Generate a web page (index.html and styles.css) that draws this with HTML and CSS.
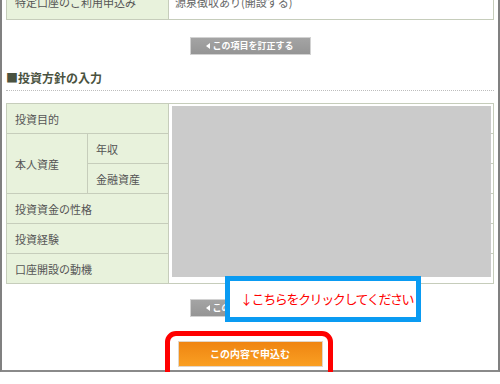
FILE: index.html
```html
<!DOCTYPE html>
<html lang="ja">
<head>
  <meta charset="UTF-8">
  <title>投資方針の入力</title>
  <link rel="stylesheet" href="styles.css">
</head>
<body>
  <div class="frame">
    <table class="form-table top-table">
      <colgroup>
        <col class="col-label">
        <col>
      </colgroup>
      <tr>
        <th>特定口座のご利用申込み</th>
        <td class="value">源泉徴収あり(開設する)</td>
      </tr>
    </table>

    <div class="btn-row first">
      <a class="btn-gray">この項目を訂正する</a>
    </div>

    <h2 class="section-title">■投資方針の入力</h2>

    <div class="table-wrap">
      <table class="form-table">
        <colgroup>
          <col class="col-half">
          <col class="col-half">
          <col>
        </colgroup>
        <tr>
          <th colspan="2">投資目的</th>
          <td></td>
        </tr>
        <tr>
          <th rowspan="2">本人資産</th>
          <th>年収</th>
          <td></td>
        </tr>
        <tr>
          <th>金融資産</th>
          <td></td>
        </tr>
        <tr>
          <th colspan="2">投資資金の性格</th>
          <td></td>
        </tr>
        <tr>
          <th colspan="2">投資経験</th>
          <td></td>
        </tr>
        <tr>
          <th colspan="2">口座開設の動機</th>
          <td></td>
        </tr>
      </table>
      <div class="mask"></div>
    </div>

    <div class="btn-row second">
      <a class="btn-gray">この項目を訂正する</a>
    </div>

    <div class="btn-row submit">
      <a class="btn-orange">この内容で申込む</a>
    </div>

    <div class="note">↓こちらをクリックしてください</div>
    <div class="highlight"></div>
  </div>
</body>
</html>
```

FILE: styles.css
```css
body {
  margin: 0;
  font-family: "Noto Sans CJK JP", "Noto Sans", sans-serif;
  background: #fff;
  overflow: hidden;
}
.frame {
  position: relative;
  width: 500px;
  box-sizing: border-box;
  margin-top: -17px;
  padding: 0 4px 3px;
  border-left: 2px solid #808080;
  border-right: 2px solid #808080;
  border-bottom: 2px solid #8a8a8a;
}
.form-table {
  width: 100%;
  table-layout: fixed;
  border-collapse: collapse;
  border: 1px solid #c3cbb8;
}
.form-table th,
.form-table td {
  border: 1px solid #c6cdbb;
  padding: 0 8px;
  height: 29px;
  font-size: 11px;
  font-weight: normal;
  color: #555;
  text-align: left;
  vertical-align: middle;
}
.top-table th,
.top-table td {
  height: 35px;
}
.form-table th {
  background: #e8f2dc;
}
.form-table td {
  background: #fff;
}
.form-table td.value {
  padding-left: 6px;
  color: #666;
}
.col-label {
  width: 162px;
}
.col-half {
  width: 81px;
}
.btn-row {
  text-align: center;
  line-height: 0;
}
.btn-row.first {
  margin-top: 17px;
}
.btn-row.second {
  margin-top: 15px;
}
.btn-row.submit {
  margin-top: 24px;
}
.btn-gray {
  display: inline-block;
  width: 121px;
  height: 18px;
  box-sizing: border-box;
  border: 1px solid #d2d2d2;
  background: linear-gradient(#a4a4a4, #959595);
  color: #fff;
  font-size: 9px;
  font-weight: bold;
  line-height: 16px;
  text-align: center;
}
.btn-gray::before {
  content: "";
  display: inline-block;
  width: 0;
  height: 0;
  margin-right: 2px;
  border-top: 3px solid transparent;
  border-bottom: 3px solid transparent;
  border-right: 4px solid #fff;
  vertical-align: 0;
}
.btn-orange {
  display: inline-block;
  width: 145px;
  height: 26px;
  box-sizing: border-box;
  border: 1px solid #e2d6c8;
  background: linear-gradient(#ef8512, #fa9f22);
  color: #fff;
  font-size: 10px;
  font-weight: bold;
  line-height: 24px;
  text-align: center;
}
.section-title {
  margin: 14px 0 0;
  padding-bottom: 3px;
  border-bottom: 1px dotted #bdbdbd;
  font-size: 12px;
  line-height: 18px;
  font-weight: bold;
  color: #4a5240;
}
.table-wrap {
  position: relative;
  margin-top: 12px;
}
.mask {
  position: absolute;
  top: 3px;
  left: 163px;
  right: 3px;
  bottom: 7px;
  border-left: 3px solid #fff;
  background: #cbcbcb;
}
.note {
  position: absolute;
  top: 293px;
  left: 223px;
  width: 196px;
  height: 46px;
  box-sizing: border-box;
  border: 5px solid #0a9bf2;
  background: #fff;
  padding-left: 10px;
  color: #f00;
  font-size: 13px;
  letter-spacing: -1.4px;
  line-height: 36px;
  white-space: nowrap;
}
.highlight {
  position: absolute;
  top: 348px;
  left: 163px;
  width: 168px;
  height: 52px;
  box-sizing: border-box;
  border: 5px solid #f00;
  border-radius: 11px;
}
```
